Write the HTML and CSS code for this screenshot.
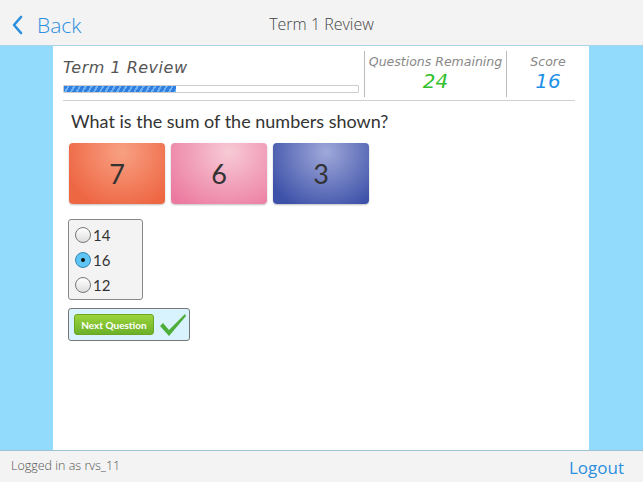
FILE: index.html
```html
<!doctype html>
<html lang="en">
<head>
  <meta charset="utf-8" />
  <title>Term 1 Review</title>
  <link rel="stylesheet" href="styles.css">
</head>
<body>
  <!-- Navigation bar -->
  <div class="navbar">
    <a class="back">
      <svg width="12" height="20" viewBox="0 0 12 20"><path d="M10 2 L3 10 L10 18" fill="none" stroke="#2b8fe0" stroke-width="2.6" stroke-linecap="round" stroke-linejoin="round"/></svg>
      <span>Back</span>
    </a>
    <div class="nav-title">Term 1 Review</div>
  </div>

  <div class="stage">
    <div class="panel">
      <!-- Quiz header -->
      <div class="quiz-head">
        <div class="quiz-name">
          <div class="hand title">Term 1 Review</div>
          <div class="progress"><div class="fill" style="width:38%"></div></div>
        </div>
        <div class="stat stat-q">
          <div class="hand label">Questions Remaining</div>
          <div class="hand value green">24</div>
        </div>
        <div class="stat stat-s">
          <div class="hand label">Score</div>
          <div class="hand value blue">16</div>
        </div>
      </div>
      <div class="rule"></div>

      <div class="question">What is the sum of the numbers shown?</div>

      <div class="tiles">
        <div class="tile orange">7</div>
        <div class="tile pink">6</div>
        <div class="tile navy">3</div>
      </div>

      <div class="answers">
        <label class="opt"><span class="radio"></span>14</label>
        <label class="opt"><span class="radio on"></span>16</label>
        <label class="opt"><span class="radio"></span>12</label>
      </div>

      <div class="next-box">
        <button class="next">Next Question</button>
        <svg width="30" height="26" viewBox="0 0 30 26"><path d="M2 14 L5 11 L11 18 L27 2 L28 4 L11 24 Z" fill="#4fae3a"/></svg>
      </div>
    </div>
  </div>

  <!-- Footer -->
  <div class="footer">
    <span class="user">Logged in as rvs_11</span>
    <a class="logout">Logout</a>
  </div>
</body>
</html>
```

FILE: styles.css
```css
html, body { margin:0; padding:0; height:100%; }
body {
  font-family: "Open Sans", "Noto Sans", sans-serif;
  display:flex; flex-direction:column;
  width:643px; height:482px; overflow:hidden;
  background:#f3f3f3;
}
/* Nav bar */
.navbar {
  height:45px; flex:none; position:relative;
  display:flex; align-items:center; justify-content:center;
  background:#f3f3f3; border-bottom:1px solid #a9d4e6;
}
.back {
  position:absolute; left:11px; top:11px;
  display:flex; align-items:center; gap:14px;
  color:#2b8fe0; font-size:21px; font-weight:300;
}
.nav-title { font-size:16px; color:#444; font-weight:300; margin-top:2px; }

/* Content stage */
.stage {
  flex:1; background:#93dbfc;
  display:flex;
  padding:0 54px 0 53px;
}
.panel {
  flex:1; min-width:0; background:#fff;
  padding:3px 0 0 10px;
}
.hand { font-family: "DejaVu Sans", sans-serif; font-style:italic; }
.quiz-head { display:flex; height:51px; }
.rule { height:1px; background:#d0d0d0; margin-right:14px; }
.quiz-name { width:301px; }
.title { font-size:16px; color:#555; margin-top:9px; letter-spacing:0.5px; font-weight:300; }
.progress {
  margin-top:8px; height:6px; width:294px;
  border:1px solid #ccc; border-radius:1px;
}
.fill {
  height:100%;
  background:repeating-linear-gradient(120deg,#2f7fe0 0 3px,#6fb0f4 3px 5px);
}
.stat {
  display:flex; flex-direction:column; align-items:center;
  border-left:1px solid #bbb; margin-top:2px; height:46px;
}
.stat-q { width:141px; }
.stat-s { width:82px; }
.label { font-size:12.5px; color:#888; margin-top:3px; font-weight:300; }
.value { font-size:20px; line-height:24px; }
.green { color:#31c02e; }
.blue { color:#1e90e8; }

.question { font-family:Lato, sans-serif; font-size:18px; color:#333; margin:9px 0 0 8px; }

.tiles { display:flex; gap:6px; margin:11px 0 0 6px; }
.tile {
  width:96px; height:61px; border-radius:4px;
  display:flex; align-items:center; justify-content:center;
  font-family:Lato, sans-serif;
  font-size:27px; color:#333; box-shadow:0 1px 2px rgba(0,0,0,0.25);
}
.orange { background:radial-gradient(ellipse at 55% 15%,#f8a083,#ee6743 80%); }
.pink { background:radial-gradient(ellipse at 60% 15%,#f7cad6,#ec7aa0 90%); }
.navy { background:radial-gradient(ellipse at 55% 15%,#a0a9da,#3d51a8 85%); }

.answers {
  margin:15px 0 0 5px; width:67px;
  background:#f3f3f3; border:1px solid #888; border-radius:3px;
  padding:4px 0 3px 6px;
  display:flex; flex-direction:column; gap:3px;
}
.opt { display:flex; align-items:center; font-family:Lato, sans-serif; font-size:15px; color:#333; height:22px; gap:2px; }
.radio {
  width:14px; height:14px; border-radius:50%;
  border:1px solid #777; background:linear-gradient(#fff,#ddd);
  position:relative;
}
.radio.on { background:#5ec4f4; border-color:#3a85b5; }
.radio.on::after {
  content:""; position:absolute; left:5px; top:5px;
  width:4px; height:4px; border-radius:50%; background:#111;
}
.next-box {
  margin:8px 0 0 5px; width:122px; height:33px;
  box-sizing:border-box;
  background:#d8f3fd; border:1px solid #777; border-radius:3px;
  display:flex; align-items:center; padding-left:5px; gap:4px;
}
.next {
  width:80px; height:21px; border:1px solid #6aa61f; border-radius:3px;
  background:linear-gradient(#9bd43c,#6cb12a);
  color:#fff; font-weight:bold; font-size:10px; padding:0;
  font-family:Lato, "Open Sans", sans-serif;
}

/* Footer */
.footer {
  height:31px; flex:none;
  border-top:1px solid #9ec2d2;
  display:flex; align-items:center; justify-content:space-between;
  padding:0 19px 0 11px;
}
.user { font-size:12.5px; color:#555; font-weight:300; margin-top:-2px; }
.logout { font-size:17px; color:#2b8fe0; margin-top:2px; }
```
